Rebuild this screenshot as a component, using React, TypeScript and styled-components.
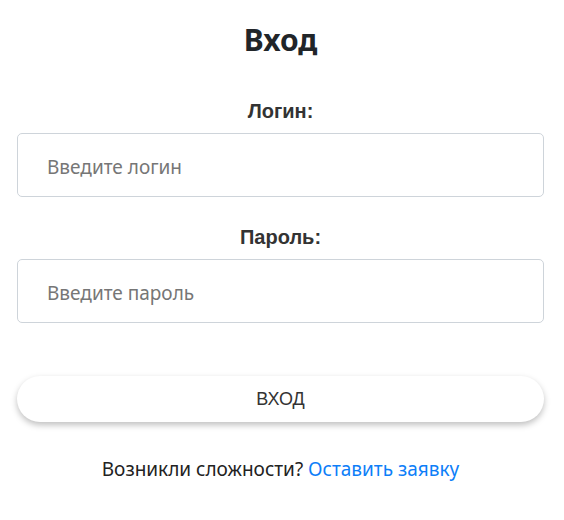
import React from "react";
import styled, { createGlobalStyle } from "styled-components";

const GlobalStyle = createGlobalStyle`
  body {
    margin: 0;
    background: #ffffff;
    font-family: "Noto Sans", "Open Sans", sans-serif;
  }
`;

const LoginStyle = styled.div`
  width: 527px;
  margin-left: 17px;
  padding-top: 20px;
  display: flex;
  flex-direction: column;
  align-items: center;
`;

const Title = styled.h1`
  margin: 0 0 40px;
  font-family: "Noto Sans", sans-serif;
  font-size: 30px;
  line-height: 40px;
  font-weight: 700;
  color: #212529;
`;

const Field = styled.div<{ $gap: number }>`
  width: 100%;
  display: flex;
  flex-direction: column;
  align-items: center;
  margin-bottom: ${(p) => p.$gap}px;
`;

const Label = styled.label`
  font-family: "Liberation Sans", Arial, sans-serif;
  font-weight: 700;
  font-size: 20px;
  line-height: 23px;
  color: #333333;
  margin-bottom: 10px;
`;

const Input = styled.input`
  box-sizing: border-box;
  width: 100%;
  height: 64px;
  padding: 3px 29px 0;
  border: 1px solid #ced4da;
  border-radius: 5px;
  font-family: "Noto Sans", sans-serif;
  font-size: 19px;
  color: #333;
  outline: none;
  &::placeholder {
    color: #767676;
  }
`;

const Button = styled.button`
  width: 100%;
  height: 46px;
  border: none;
  border-radius: 23px;
  background: #ffffff;
  box-shadow: 0 3px 6px rgba(0, 0, 0, 0.25);
  font-family: "Liberation Sans", Arial, sans-serif;
  font-size: 18px;
  color: #333333;
  cursor: pointer;
`;

const Help = styled.p`
  margin: 34px 0 0;
  font-family: "Noto Sans", sans-serif;
  font-size: 19px;
  line-height: 26px;
  color: #222222;
  a {
    color: #0d7ef8;
    text-decoration: none;
  }
`;

export default function App() {
  return (
    <>
      <GlobalStyle />
      <LoginStyle>
        <Title>Вход</Title>
        <Field $gap={29}>
          <Label>Логин:</Label>
          <Input placeholder="Введите логин" />
        </Field>
        <Field $gap={53}>
          <Label>Пароль:</Label>
          <Input type="password" placeholder="Введите пароль" />
        </Field>
        <Button>ВХОД</Button>
        <Help>
          Возникли сложности? <a href="#">Оставить заявку</a>
        </Help>
      </LoginStyle>
    </>
  );
}
